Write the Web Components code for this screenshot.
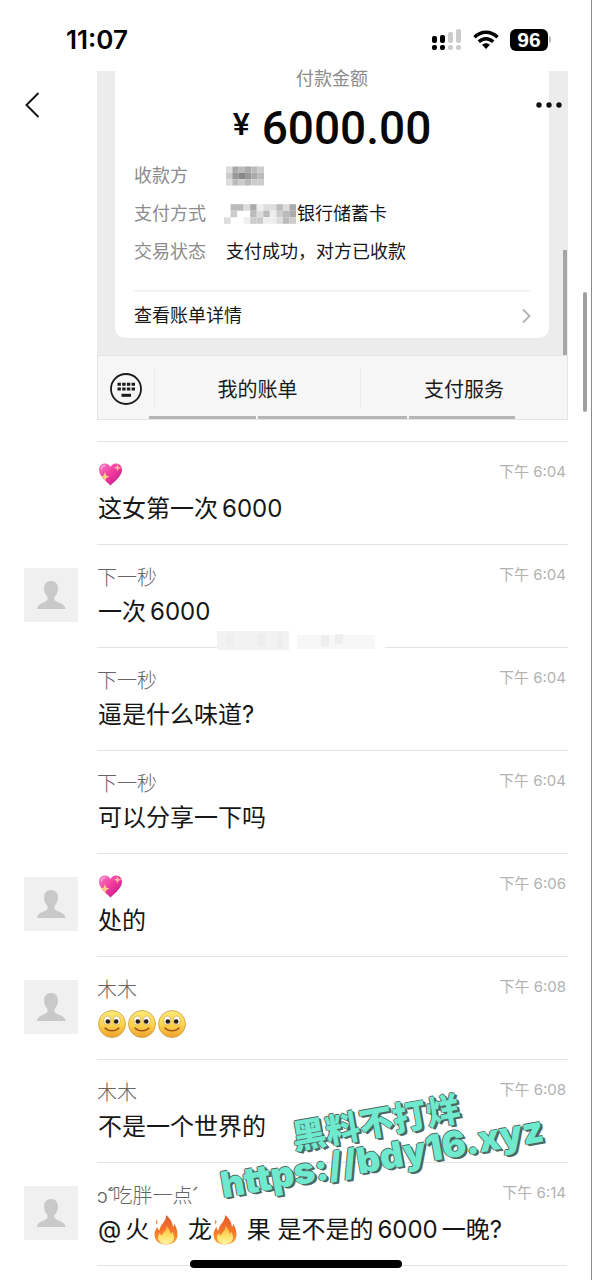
<!DOCTYPE html>
<html lang="zh-CN">
<head>
<meta charset="utf-8">
<meta name="viewport" content="width=device-width, initial-scale=1">
<title>聊天记录</title>
<style>
  html, body { margin: 0; background: #fff; }
  body { font-family: Inter, "Noto Sans CJK SC", sans-serif; color: #161616; }
</style>
</head>
<body>
<chat-page>
  <chat-message time="下午 6:04"><emoji-icon slot="name" kind="heart"></emoji-icon>这女第一次<latin-run>6000</latin-run></chat-message>
  <chat-message time="下午 6:04" avatar><span slot="name">下一秒</span>一次<latin-run>6000</latin-run></chat-message>
  <chat-message time="下午 6:04" smudge><span slot="name">下一秒</span>逼是什么味道?</chat-message>
  <chat-message time="下午 6:04"><span slot="name">下一秒</span>可以分享一下吗</chat-message>
  <chat-message time="下午 6:06" avatar><emoji-icon slot="name" kind="heart"></emoji-icon>处的</chat-message>
  <chat-message time="下午 6:08" avatar><span slot="name">木木</span><emoji-icon kind="smile"></emoji-icon><emoji-icon kind="smile"></emoji-icon><emoji-icon kind="smile"></emoji-icon></chat-message>
  <chat-message time="下午 6:08"><span slot="name">木木</span>不是一个世界的</chat-message>
  <chat-message time="下午 6:14" avatar><span slot="name">ɔ̆՛吃胖一点՛</span>@<latin-run>火</latin-run><emoji-icon kind="fire"></emoji-icon> 龙<emoji-icon kind="fire"></emoji-icon> 果 是不是的<latin-run>6000</latin-run>一晚?</chat-message>
</chat-page>

<script>
const define = (name, html, setup) => {
  const template = document.createElement('template');
  template.innerHTML = html;
  customElements.define(name, class extends HTMLElement {
    constructor() {
      super();
      this.attachShadow({ mode: 'open' }).append(template.content.cloneNode(true));
    }
    connectedCallback() { if (setup) setup(this, this.shadowRoot); }
  });
};

// Grey pixel blocks: one character per cell, a hex digit from dark to light, "." for none.
const mosaic = (rows, cell) => rows.map((row, y) => [...row].map((c, x) =>
  c === '.' ? '' : `<rect x="${x * cell}" y="${y * cell}" width="${cell}" height="${cell}" fill="#${(c + c).repeat(3)}"/>`).join('')).join('');

define('latin-run', `<style>:host { display: inline; margin: 0 4px; }</style><slot></slot>`);

const emojis = {
  heart: `<svg width="26" height="26" viewBox="0 0 26 26" role="img" aria-label="爱心">
    <defs><linearGradient id="h" x1="0" y1="0" x2="1" y2="1"><stop offset="0" stop-color="#ff7cc4"/><stop offset=".5" stop-color="#f0389f"/><stop offset="1" stop-color="#b81482"/></linearGradient></defs>
    <path d="M13.500 24.500C9 20 2 15 2 8.800C2 4.900 4.600 2.500 7.800 2.500C10.300 2.500 12.500 3.800 13.500 6C14.500 3.800 16.500 2.500 19 2.500C22.400 2.500 25 4.900 25 8.800C25 15 18 20 13.500 24.500Z" fill="url(#h)"/>
    <path d="M4.500 8C4.500 6.200 6 4.900 8 4.700" fill="none" stroke="#ffb4dc" stroke-width="1.300" stroke-linecap="round"/>
    <path d="M8 11L9.200 14.600L12.500 15.800L9.200 17L8 20.600L6.800 17L3 15.800L6.800 14.600Z" fill="#ffd08a"/>
    <path d="M20.500 3L21.500 5.800L24.500 6.800L21.500 7.800L20.500 10.600L19.500 7.800L17 6.800L19.500 5.800Z" fill="#ffb9a0"/></svg>`,
  smile: `<svg width="30" height="30" viewBox="0 0 30 30" role="img" aria-label="微笑">
    <defs><linearGradient id="s" x1="0" y1="0" x2="0" y2="1"><stop offset="0" stop-color="#fbe878"/><stop offset=".5" stop-color="#fbd64e"/><stop offset="1" stop-color="#f0a02c"/></linearGradient></defs>
    <circle cx="14" cy="15" r="13.500" fill="url(#s)" stroke="#c99a4a" stroke-width=".8"/>
    <ellipse cx="9.300" cy="11.500" rx="3.400" ry="4.400" fill="#fff" stroke="#c9983a" stroke-width=".6"/><ellipse cx="18.700" cy="11.500" rx="3.400" ry="4.400" fill="#fff" stroke="#c9983a" stroke-width=".6"/>
    <circle cx="9.800" cy="12.500" r="2.300" fill="#2b1a10"/><circle cx="18.200" cy="12.500" r="2.300" fill="#2b1a10"/>
    <path d="M7 19C10.500 22.800 17.500 22.800 21 19" fill="none" stroke="#9a4c10" stroke-width="1.200" stroke-linecap="round"/></svg>`,
  fire: `<svg width="26" height="32" viewBox="0 0 26 32" role="img" aria-label="火">
    <defs><linearGradient id="f" x1="0" y1="0" x2="0" y2="1"><stop offset="0" stop-color="#e4562c"/><stop offset=".6" stop-color="#f57b2c"/><stop offset="1" stop-color="#f9a637"/></linearGradient>
    <linearGradient id="g" x1="0" y1="0" x2="0" y2="1"><stop offset="0" stop-color="#ffb43c"/><stop offset=".6" stop-color="#ffe36a"/><stop offset="1" stop-color="#fff3a8"/></linearGradient></defs>
    <path d="M13 1C18 5 19.500 9 20 13C20.800 12 21.200 11 21 9.500C23.500 13 24.500 17 24.500 20.500C24.500 27 20 30.500 13 30.500C6 30.500 1.500 27 1.500 20.500C1.500 17.500 3 15 4.500 13C4.800 14.800 5.500 16 6.500 16.500C7 10 13.500 8 13 1Z" fill="url(#f)"/>
    <path d="M3.500 5.500C5 7.500 4.800 9 3.500 10.500C2.300 9 2.500 7.500 3.500 5.500Z" fill="#f0935a"/>
    <path d="M13.500 12C16.500 15 17 18 18 20C18.800 19 19 18.200 19 17.500C20.500 19.500 21 21.500 21 23.500C21 27.800 17.500 30 13 30C8.500 30 5 27.500 5 23.500C5 21.500 6 20 7 19C7.300 20.500 8 21.500 9 21.500C9.500 18 14 17 13.500 12Z" fill="url(#g)"/></svg>`
};
define('emoji-icon', `<style>
  :host { display: inline-block; vertical-align: middle; height: 30px; }
  :host([kind="heart"]) { height: 28px; }
  :host([kind="fire"]) { margin: 0 2px 0 0; height: 32px; }
  svg { display: block; }
</style><div></div>`, (el, root) => { root.querySelector('div').innerHTML = emojis[el.getAttribute('kind')]; });

define('status-bar', `<style>
  :host { display: flex; align-items: center; justify-content: space-between; box-sizing: border-box; height: 71px; padding: 0 40px 0 66px; }
  time { font-size: 26px; line-height: 32px; font-weight: 600; margin-top: 8px; color: #000; }
  .icons { display: flex; align-items: center; gap: 11px; margin-top: 8px; }
  .level { display: flex; align-items: center; gap: 1px; }
  .level b { background: #000; color: #fff; border-radius: 6px; width: 38px; font-family: "Liberation Sans", sans-serif; font-size: 21px; line-height: 22px; text-align: center; font-weight: 700; }
  .level i { width: 2px; height: 7px; background: #bbb; border-radius: 0 2px 2px 0; }
  svg { display: block; }
</style>
<time>11:07</time>
<div class="icons">
  <svg width="31" height="22" viewBox="0 0 31 22" aria-label="信号">
    <g fill="#000"><rect x="1" y="7" width="5" height="7" rx="2"/><rect x="1" y="16" width="5" height="5" rx="2"/><rect x="9" y="6" width="5" height="8" rx="2"/><rect x="9" y="16" width="5" height="5" rx="2"/></g>
    <g fill="#ccc"><rect x="17" y="3" width="5" height="11" rx="2"/><rect x="17" y="16" width="5" height="5" rx="2"/><rect x="25" y="0" width="5" height="14" rx="2"/><rect x="25" y="16" width="5" height="5" rx="2"/></g>
  </svg>
  <svg width="26" height="20" viewBox="0 0 26 20" aria-label="无线网络">
    <g fill="none" stroke="#000" stroke-width="3.400"><path d="M1.500 7.300C8 .6 18 .6 24.500 7.300"/><path d="M5.800 11.800C10 7.700 16 7.700 20.200 11.800"/></g>
    <path d="M9 14.800C11.300 12.700 14.700 12.700 17 14.800L13 19Z" fill="#000"/>
  </svg>
  <div class="level"><b>96</b><i></i></div>
</div>`);

define('pay-shot', `<style>
  :host { display: block; position: relative; background: #ececec; }
  button { font: inherit; color: inherit; background: none; border: 0; padding: 0; margin: 0; }
  .card { margin: 0 19px 0 18px; height: 267px; background: #fff; border-radius: 0 0 10px 10px; box-sizing: border-box; padding: 0 19px; font-size: 18px; line-height: 26px; display: flex; flex-direction: column; }
  .title { text-align: center; color: #8c8c8c; margin-top: -5px; }
  .sum { display: flex; justify-content: center; align-items: flex-start; gap: 12px; font-family: Roboto, sans-serif; font-weight: 500; font-size: 46px; line-height: 56px; color: #080808; margin: 8px 0 7px; }
  .sum small { font-size: 32px; line-height: 48px; }
  dl { display: grid; grid-template-columns: 92px 1fr; row-gap: 12px; margin: 0; }
  dt { color: #8c8c8c; }
  dd { margin: 0; display: flex; align-items: center; white-space: nowrap; }
  dd svg { margin-right: 1px; margin-left: -2px; }
  #payee { margin-left: 0; }
  hr { border: 0; height: 2px; background: #f2f2f2; margin: 25px 0 0; width: 100%; flex: none; }
  .detail { display: flex; justify-content: space-between; align-items: center; line-height: 48px; margin-right: -4px; text-align: left; }
  .gap { height: 17px; }
  .bar { height: 65px; box-sizing: border-box; border: 1px solid #e4e4e4; background: #f6f6f6; display: grid; grid-template-columns: 56px 206px 1fr; align-items: center; font-size: 20px; color: #1c1c1c; position: relative; }
  .bar button { height: 40px; padding-top: 2px; }
  .bar button + button { border-left: 1px solid #ececec; }
  .bar svg { display: block; margin: 0 auto; }
  .tabs { position: absolute; left: 51px; bottom: 0; width: 366px; display: grid; grid-template-columns: 107px 149px 106px; gap: 2px; }
  .tabs i { height: 3px; background: #b6b6b6; }
  .scroll { position: absolute; right: 1px; bottom: 65px; width: 4px; height: 105px; background: #a6a6a6; }
  .more { position: absolute; right: 4px; top: 24px; height: 20px; }
  .more svg { display: block; }
</style>
<div class="card">
  <div class="title">付款金额</div>
  <div class="sum"><small>¥</small><span>6000.00</span></div>
  <dl>
    <dt>收款方</dt><dd><svg id="payee" width="38" height="20" viewBox="0 0 36 18"></svg></dd>
    <dt>支付方式</dt><dd><svg id="bank" width="72" height="20" viewBox="0 0 66 18"></svg>银行储蓄卡</dd>
    <dt>交易状态</dt><dd>支付成功，对方已收款</dd>
  </dl>
  <hr>
  <button class="detail"><span>查看账单详情</span><svg width="12" height="16" viewBox="0 0 12 16"><path d="M1 1.500L7.500 8L1 14.500" fill="none" stroke="#b2b2b2" stroke-width="1.800"/></svg></button>
</div>
<div class="gap"></div>
<div class="bar">
  <button aria-label="键盘"><svg width="34" height="34" viewBox="0 0 34 34"><circle cx="17" cy="17" r="15" fill="none" stroke="#1a1a1a" stroke-width="1.800"/><path d="M8.500 12.300H26M8.500 17H26" stroke="#1a1a1a" stroke-width="3" stroke-dasharray="3.400 1.300"/><path d="M12.500 23.300H22" stroke="#1a1a1a" stroke-width="3"/></svg></button>
  <button>我的账单</button>
  <button>支付服务</button>
  <div class="tabs"><i></i><i></i><i></i></div>
</div>
<div class="scroll"></div>
<button class="more" aria-label="更多"><svg width="30" height="20" viewBox="0 0 30 20"><g fill="#111"><circle cx="5" cy="10" r="2.700"/><circle cx="15" cy="10" r="2.700"/><circle cx="25" cy="10" r="2.700"/></g></svg></button>`,
(el, root) => {
  root.getElementById('payee').innerHTML = mosaic(['dababc', 'c989ab', 'dbcbcc'], 6);
  root.getElementById('bank').innerHTML = mosaic(['.bbdaeddbda', '.c..bdbecba', 'd..ecceedbc'], 6);
});

define('user-avatar', `<style>:host { display: block; width: 54px; height: 54px; background: #f0f0f0; } svg { display: block; }</style>
<svg width="54" height="54" viewBox="0 0 54 54" aria-label="头像"><path d="M27 13C31.500 13 34 16 34 20.500C34 24 32.500 27 30.500 29V32C33 35 41.500 35.500 41.500 41H13C13 35.500 21 35 23.500 32V29C21.500 27 20 24 20 20.500C20 16 22.500 13 27 13Z" fill="#c9c9c9"/></svg>`);

define('chat-message', `<style>
  :host { display: grid; grid-template-columns: 73px 1fr; padding: 0 24px; }
  user-avatar { margin-top: 24px; }
  :host(:not([avatar])) user-avatar { display: none; }
  .body { grid-column: 2; grid-row: 1; border-top: 1px solid #e4e4e4; height: 102px; position: relative; display: grid; grid-template-columns: 1fr auto; grid-template-rows: 26px 32px; row-gap: 5px; align-content: center; }
  .name { font-size: 20px; line-height: 26px; height: 26px; color: #666; font-weight: 300; display: flex; align-items: center; }
  time { font-size: 15px; line-height: 20px; color: #b2b2b2; margin-right: 2px; }
  .text { grid-column: 1 / -1; font-size: 24px; line-height: 32px; height: 32px; padding-left: 1px; display: flex; align-items: center; white-space: pre; }
  .smudge { display: none; position: absolute; left: 120px; top: -18px; background: #fff; }
  :host([smudge]) .smudge { display: block; }
</style>
<user-avatar></user-avatar>
<div class="body">
  <div class="name"><slot name="name"></slot></div><time></time>
  <div class="text"><slot></slot></div>
  <svg class="smudge" width="168" height="22" viewBox="0 0 168 22"></svg>
</div>`, (el, root) => {
  root.querySelector('time').textContent = el.getAttribute('time');
  root.querySelector('.smudge').innerHTML =
    '<rect y="1" width="72" height="19" fill="#f2f2f2"/><rect x="80" y="5" width="78" height="14" fill="#f7f7f7"/><path d="M10 4H16V16H10ZM40 4H48V16H40ZM60 3H66V18H60ZM104 5H112V16H104ZM118 4H126V14H118Z" fill="#eee"/>';
});

define('promo-mark', `<style>
  :host { display: block; position: absolute; left: 210px; top: 1106px; width: 338px; transform: rotate(-10deg); color: #6feacf; font-weight: 900; white-space: nowrap; text-shadow: 1px 1px 0 #4c6661, 2px 2px 0 #4c6661, -1px 0 0 #4c6661, 0 -1px 0 #4c6661; }
  div { display: flex; justify-content: center; font-size: 34px; line-height: 34px; }
  div + div { font-size: 36px; }
</style><div>黑料不打烊</div><div>https://bdy16.xyz</div>`);

define('chat-page', `<style>
  :host { display: block; position: relative; min-height: 100vh; box-sizing: border-box; border-right: 1px solid #8c8c8c; background: #fff; overflow: hidden; padding-bottom: 12px; }
  .top { display: grid; grid-template-columns: 73px 1fr; padding: 0 23px 21px 24px; align-items: start; }
  .back { border: 0; background: none; padding: 0; margin-top: 20px; width: 18px; height: 28px; }
  .back svg { display: block; }
  .list { margin-right: -1px; }
  .end { margin: 0 24px 0 97px; height: 1px; background: #e4e4e4; }
  .thumb { position: absolute; right: 4px; top: 292px; width: 4px; height: 120px; border-radius: 2px; background: #a0a0a0; }
  .home { position: absolute; left: 50%; bottom: 12px; width: 212px; margin-left: -106px; height: 8px; border-radius: 4px; background: #000; }
</style>
<status-bar></status-bar>
<div class="top">
  <button class="back" aria-label="返回"><svg width="18" height="28" viewBox="0 0 18 28"><path d="M14.500 2L2.500 14L14.500 26" fill="none" stroke="#151515" stroke-width="2"/></svg></button>
  <pay-shot></pay-shot>
</div>
<div class="list"><slot></slot></div>
<div class="end"></div>
<promo-mark></promo-mark>
<div class="thumb"></div>
<div class="home"></div>`);
</script>
</body>
</html>
